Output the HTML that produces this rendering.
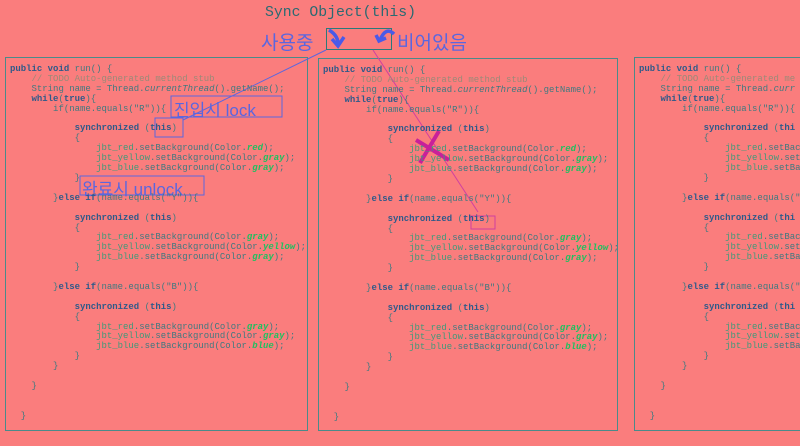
<!DOCTYPE html>
<html><head><meta charset="utf-8"><style>
html,body{margin:0;padding:0;overflow:hidden}
body{width:800px;height:446px;background:#fa7d7d;position:relative;overflow:hidden;font-family:"Liberation Mono",monospace}
.p{position:absolute;border:1px solid #4a8a8a;box-sizing:border-box}
.clip{position:absolute;left:0;top:0;width:800px;height:446px;overflow:hidden}
pre{position:absolute;margin:0;font:8.97px/9.9px "Liberation Mono",monospace;color:#3f7a80;white-space:pre}
.k{color:#2e5a8a;font-weight:bold}
.c{color:#9a8a78}
.g{color:#3f9a7a}
.i{color:#1fc060;font-style:italic;font-weight:bold}
.ab{position:absolute;font-family:"Liberation Sans","Noto Sans CJK KR",sans-serif;color:#5a66e0;white-space:nowrap}
</style></head><body><div class="clip">
<div class="p" style="left:5px;top:57px;width:303px;height:374px"></div>
<div class="p" style="left:318px;top:58px;width:300px;height:373px"></div>
<div class="p" style="left:634px;top:57px;width:180px;height:374px"></div>

<div style="position:absolute;left:265px;top:5px;font:14.8px 'Liberation Mono',monospace;color:#2a6a72">Sync Object(this)</div>
<div class="ab" style="left:261px;top:28px;font-size:19px">사용중</div>
<div class="ab" style="left:397px;top:28px;font-size:19px">비어있음</div>
<div style="position:absolute;left:326px;top:28px;width:66px;height:22px;border:1px solid #2a7a7a;box-sizing:border-box"></div>

<svg width="800" height="446" style="position:absolute;left:0;top:0">
<path d="M326 50 L183 120" stroke="#5a66e0" stroke-width="1"/>
<path d="M329 30 Q339 36 338 46" stroke="#4a5ae8" stroke-width="3.5" fill="none"/>
<path d="M332 39 L338 46 L344 37" stroke="#4a5ae8" stroke-width="3.5" fill="none"/>
<path d="M394 34 Q386 26 380 40" stroke="#4a5ae8" stroke-width="3.5" fill="none"/>
<path d="M376 35 L379 41 L386 38" stroke="#4a5ae8" stroke-width="3.5" fill="none"/>
<path d="M373 50 L478 212" stroke="#d040a0" stroke-width="1"/>
<path d="M416 140 L449 160 M439 131 L420 163" stroke="#c8209a" stroke-width="4"/>
<rect x="471" y="216" width="24" height="13" fill="none" stroke="#d040a0" stroke-width="1"/>
<rect x="171" y="96" width="111" height="21" fill="none" stroke="#5a66e0"/>
<rect x="80" y="176" width="124" height="19" fill="none" stroke="#5a66e0"/>
<rect x="155" y="118" width="28" height="19" fill="none" stroke="#5a66e0"/>
</svg>
<div class="ab" style="left:174px;top:96px;font-size:17px">진입시 lock</div>
<div class="ab" style="left:82px;top:175px;font-size:17px">완료시 unlock</div>

<pre style="left:10px;top:65px"><span class="k">public void</span> run() {
    <span class="c">// TODO Auto-generated method stub</span>
    String name = Thread.<i>currentThread</i>().getName();
    <span class="k">while</span>(<span class="k">true</span>){
        if(name.equals("R")){

            <span class="k">synchronized</span> (<span class="k">this</span>)
            {
                <span class="g">jbt_red</span>.setBackground(Color.<span class="i">red</span>);
                <span class="g">jbt_yellow</span>.setBackground(Color.<span class="i">gray</span>);
                <span class="g">jbt_blue</span>.setBackground(Color.<span class="i">gray</span>);
            }

        }<span class="k">else if</span>(name.equals("Y")){

            <span class="k">synchronized</span> (<span class="k">this</span>)
            {
                <span class="g">jbt_red</span>.setBackground(Color.<span class="i">gray</span>);
                <span class="g">jbt_yellow</span>.setBackground(Color.<span class="i">yellow</span>);
                <span class="g">jbt_blue</span>.setBackground(Color.<span class="i">gray</span>);
            }

        }<span class="k">else if</span>(name.equals("B")){

            <span class="k">synchronized</span> (<span class="k">this</span>)
            {
                <span class="g">jbt_red</span>.setBackground(Color.<span class="i">gray</span>);
                <span class="g">jbt_yellow</span>.setBackground(Color.<span class="i">gray</span>);
                <span class="g">jbt_blue</span>.setBackground(Color.<span class="i">blue</span>);
            }
        }

    }


  }</pre>
<pre style="left:323px;top:66px"><span class="k">public void</span> run() {
    <span class="c">// TODO Auto-generated method stub</span>
    String name = Thread.<i>currentThread</i>().getName();
    <span class="k">while</span>(<span class="k">true</span>){
        if(name.equals("R")){

            <span class="k">synchronized</span> (<span class="k">this</span>)
            {
                <span class="g">jbt_red</span>.setBackground(Color.<span class="i">red</span>);
                <span class="g">jbt_yellow</span>.setBackground(Color.<span class="i">gray</span>);
                <span class="g">jbt_blue</span>.setBackground(Color.<span class="i">gray</span>);
            }

        }<span class="k">else if</span>(name.equals("Y")){

            <span class="k">synchronized</span> (<span class="k">this</span>)
            {
                <span class="g">jbt_red</span>.setBackground(Color.<span class="i">gray</span>);
                <span class="g">jbt_yellow</span>.setBackground(Color.<span class="i">yellow</span>);
                <span class="g">jbt_blue</span>.setBackground(Color.<span class="i">gray</span>);
            }

        }<span class="k">else if</span>(name.equals("B")){

            <span class="k">synchronized</span> (<span class="k">this</span>)
            {
                <span class="g">jbt_red</span>.setBackground(Color.<span class="i">gray</span>);
                <span class="g">jbt_yellow</span>.setBackground(Color.<span class="i">gray</span>);
                <span class="g">jbt_blue</span>.setBackground(Color.<span class="i">blue</span>);
            }
        }

    }


  }</pre>
<pre style="left:639px;top:65px"><span class="k">public void</span> run() {
    <span class="c">// TODO Auto-generated me</span>
    String name = Thread.<i>curr</i>
    <span class="k">while</span>(<span class="k">true</span>){
        if(name.equals("R")){

            <span class="k">synchronized</span> (<span class="k">thi</span>
            {
                <span class="g">jbt_red</span>.setBack
                <span class="g">jbt_yellow</span>.setB
                <span class="g">jbt_blue</span>.setBac
            }

        }<span class="k">else if</span>(name.equals("

            <span class="k">synchronized</span> (<span class="k">thi</span>
            {
                <span class="g">jbt_red</span>.setBack
                <span class="g">jbt_yellow</span>.setB
                <span class="g">jbt_blue</span>.setBac
            }

        }<span class="k">else if</span>(name.equals("

            <span class="k">synchronized</span> (<span class="k">thi</span>
            {
                <span class="g">jbt_red</span>.setBack
                <span class="g">jbt_yellow</span>.setB
                <span class="g">jbt_blue</span>.setBac
            }
        }

    }


  }</pre>
</div></body></html>
